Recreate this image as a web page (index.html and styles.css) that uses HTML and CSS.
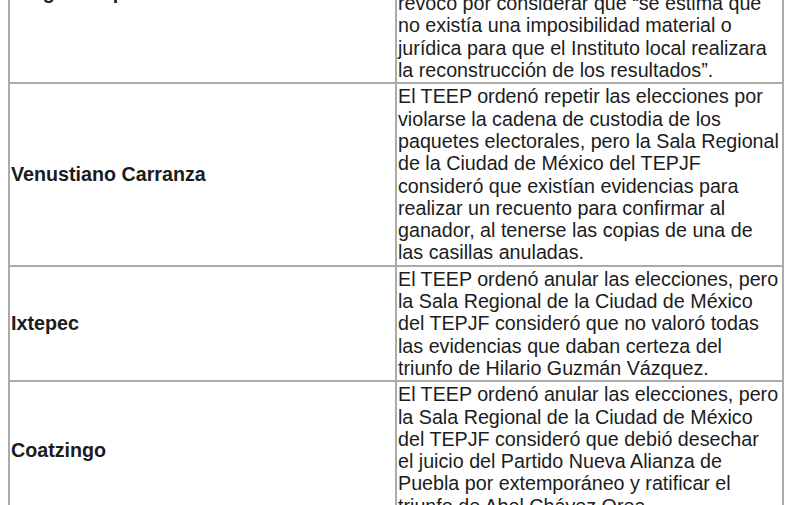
FILE: index.html
```html
<!DOCTYPE html>
<html lang="es">
<head>
<meta charset="utf-8">
<title>Elecciones</title>
<link rel="stylesheet" href="styles.css">
</head>
<body>
<table class="results">
  <tr>
    <td class="muni">Chignahuapan</td>
    <td class="desc">El TEEP ordenó repetir las elecciones por violarse la cadena de custodia de los paquetes electorales, pero la Sala Regional de la Ciudad de México del TEPJF lo revoco por considerar que “se estima que no existía una imposibilidad material o jurídica para que el Instituto local realizara la reconstrucción de los resultados”.</td>
  </tr>
  <tr>
    <td class="muni">Venustiano Carranza</td>
    <td class="desc">El TEEP ordenó repetir las elecciones por violarse la cadena de custodia de los paquetes electorales, pero la Sala Regional de la Ciudad de México del TEPJF consideró que existían evidencias para realizar un recuento para confirmar al ganador, al tenerse las copias de una de las casillas anuladas.</td>
  </tr>
  <tr>
    <td class="muni">Ixtepec</td>
    <td class="desc">El TEEP ordenó anular las elecciones, pero la Sala Regional de la Ciudad de México del TEPJF consideró que no valoró todas las evidencias que daban certeza del triunfo de Hilario Guzmán Vázquez.</td>
  </tr>
  <tr>
    <td class="muni">Coatzingo</td>
    <td class="desc">El TEEP ordenó anular las elecciones, pero la Sala Regional de la Ciudad de México del TEPJF consideró que debió desechar el&nbsp;juicio del Partido Nueva Alianza de Puebla por extemporáneo y ratificar el triunfo de Abel Chávez Orea.</td>
  </tr>
</table>
</body>
</html>
```

FILE: styles.css
```css
html, body {
  background: #ffffff;
}
body {
  margin: 0 8px;
  font-family: "Liberation Sans", Arial, Helvetica, sans-serif;
  font-size: 19.7px;
  line-height: 22.3px;
  color: #1c1c1c;
  overflow: hidden;
}
.results {
  width: 776px;
  margin-top: -100px;
  border-collapse: separate;
  border-spacing: 0;
  border: 1px solid #ababab;
  table-layout: fixed;
}
.results td {
  border: 1px solid #ababab;
  padding: 1px;
  width: 50%;
}
.muni {
  font-weight: bold;
  vertical-align: middle;
}
.desc {
  vertical-align: top;
}
```
